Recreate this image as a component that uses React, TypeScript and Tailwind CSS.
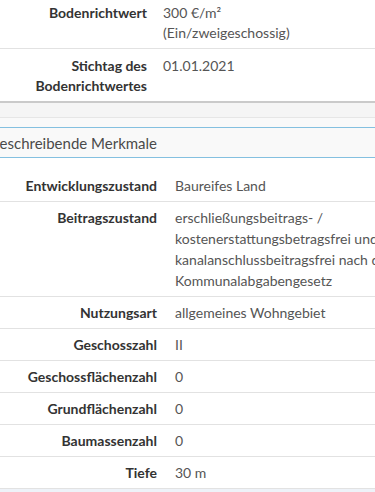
import React from "react";

type Row = { label: React.ReactNode; value: React.ReactNode };

const topRows: Row[] = [
  {
    label: "Bodenrichtwert",
    value: (
      <>
        300 €/m²
        <br />
        (Ein/zweigeschossig)
      </>
    ),
  },
  {
    label: (
      <>
        Stichtag des
        <br />
        Bodenrichtwertes
      </>
    ),
    value: "01.01.2021",
  },
];

const featureRows: Row[] = [
  { label: "Entwicklungszustand", value: "Baureifes Land" },
  {
    label: "Beitragszustand",
    value: (
      <>
        erschließungsbeitrags- /
        <br />
        kostenerstattungsbetragsfrei und
        <br />
        kanalanschlussbeitragsfrei nach dem
        <br />
        Kommunalabgabengesetz
      </>
    ),
  },
  { label: "Nutzungsart", value: "allgemeines Wohngebiet" },
  { label: "Geschosszahl", value: "II" },
  { label: "Geschossflächenzahl", value: "0" },
  { label: "Grundflächenzahl", value: "0" },
  { label: "Baumassenzahl", value: "0" },
  { label: "Tiefe", value: "30 m" },
];

export default function App() {
  return (
    <div className="w-[375px] h-[492px] overflow-hidden bg-white font-['Lato','Liberation_Sans',sans-serif] text-[14px] leading-[20px] text-[#555]">
      {/* Bodenrichtwert table */}
      <div className="-mt-[3px]">
        <div className="flex border-b border-[#e2e2e2] pt-[6px] pb-[5px]">
          <div className="w-[147px] shrink-0 text-right font-bold text-[#333]">
            {topRows[0].label}
          </div>
          <div className="pl-[16px] whitespace-nowrap">{topRows[0].value}</div>
        </div>
        <div className="flex border-b-2 border-[#cacaca] pt-[7px] pb-[5px]">
          <div className="w-[147px] shrink-0 text-right font-bold text-[#333]">
            {topRows[1].label}
          </div>
          <div className="pl-[16px] whitespace-nowrap">{topRows[1].value}</div>
        </div>
      </div>

      {/* panel footer / spacing */}
      <div className="h-[15px] bg-[#f5f5f5] border-b border-[#e6e6e6]" />
      <div className="h-[9px] bg-[#f9f9f9]" />

      {/* section heading */}
      <div className="-ml-[10px] h-[31px] bg-[#f9f9f9] border-y border-[#84c0e0] flex items-center text-[15px] text-[#4a4a4a]">
        Beschreibende Merkmale
      </div>

      {/* feature table */}
      <div className="pt-[12px]">
        {featureRows.map((r, i) => (
          <div
            key={i}
            className="flex border-b border-[#e2e2e2] py-[5px] leading-[21px]"
          >
            <div className="w-[157px] shrink-0 text-right font-bold text-[#333] whitespace-nowrap">
              {r.label}
            </div>
            <div className="pl-[18px] whitespace-nowrap">{r.value}</div>
          </div>
        ))}
      </div>
      <div className="h-[10px] bg-[#eef2f8]" />
    </div>
  );
}
